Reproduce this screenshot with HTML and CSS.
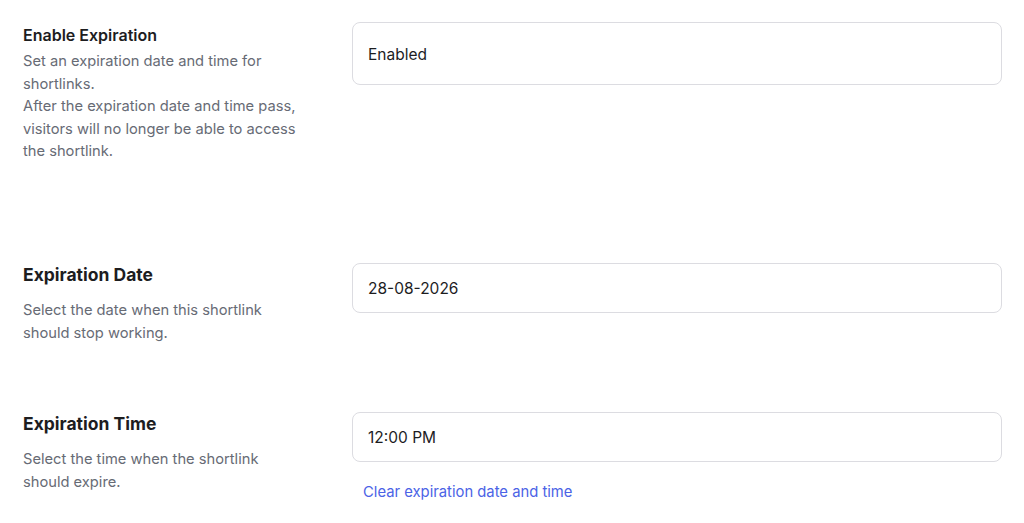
FILE: index.html
```html
<!DOCTYPE html>
<html lang="en">
<head>
  <meta charset="UTF-8">
  <title>Shortlink Expiration</title>
  <link rel="stylesheet" href="styles.css">
</head>
<body>

  <div class="settings">
    <div class="field field-toggle">
      <div class="field-info">
        <h3 class="field-title small">Enable Expiration</h3>
        <p class="field-desc">Set an expiration date and time for shortlinks.<br>
          After the expiration date and time pass, visitors will no longer be able to access the shortlink.</p>
      </div>
      <div class="field-control">
        <div class="input input-select">Enabled</div>
      </div>
    </div>

    <div class="field">
      <div class="field-info">
        <h3 class="field-title">Expiration Date</h3>
        <p class="field-desc">Select the date when this shortlink should stop working.</p>
      </div>
      <div class="field-control">
        <div class="input">28-08-2026</div>
      </div>
    </div>

    <div class="field">
      <div class="field-info">
        <h3 class="field-title">Expiration Time</h3>
        <p class="field-desc">Select the time when the shortlink should expire.</p>
      </div>
      <div class="field-control">
        <div class="input">12:00 PM</div>
        <a href="#" class="clear-link">Clear expiration date and time</a>
      </div>
    </div>
  </div>

</body>
</html>
```

FILE: styles.css
```css
body {
  margin: 0;
  padding: 22px 22px 0 23px;
  background: #fff;
  font-family: Inter, "Noto Sans", Arial, sans-serif;
  color: #1d1d1f;
}

.field {
  display: grid;
  grid-template-columns: 285px 1fr;
  column-gap: 44px;
  margin-bottom: 68px;
}
.field:last-child { margin-bottom: 0; }
.field-toggle { min-height: 173px; }

.field-title {
  margin: 0;
  font-size: 17.5px;
  font-weight: 700;
  line-height: 24px;
  color: #1d1d1f;
}
.field-title.small {
  padding-top: 2px;
  font-size: 16px;
  font-weight: 600;
  line-height: 22px;
}

.field-desc {
  margin: 12px 0 0;
  font-size: 14.7px;
  line-height: 22.5px;
  color: #676b75;
}
.field-toggle .field-desc { margin-top: 4px; }

.input {
  box-sizing: border-box;
  height: 50px;
  padding: 0 15px;
  display: flex;
  align-items: center;
  border: 1px solid #dcdce1;
  border-radius: 8px;
  font-size: 15.5px;
  color: #1d1d1f;
}
.input-select { height: 63px; padding-top: 1px; }

.clear-link {
  display: inline-block;
  margin: 20px 0 0 11px;
  font-size: 14.8px;
  line-height: 20px;
  color: #4b63e6;
  text-decoration: none;
}
```
